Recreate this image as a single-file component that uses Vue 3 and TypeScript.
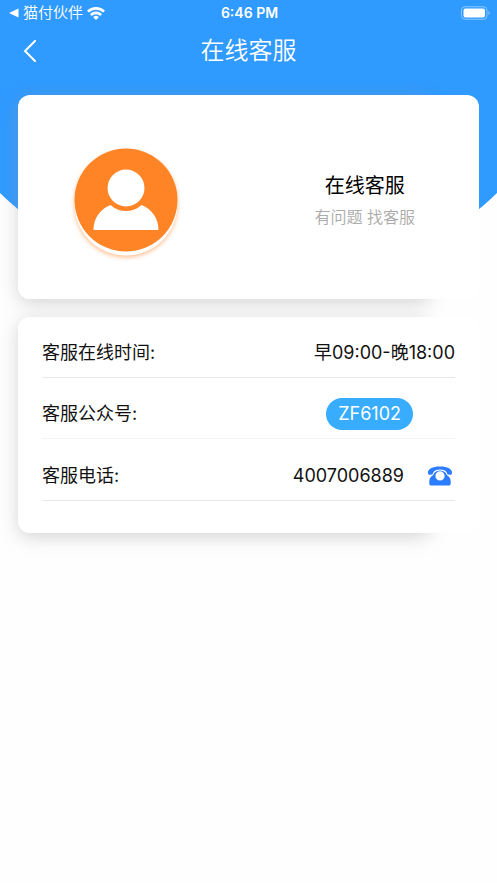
<script setup lang="ts">
import { ref } from 'vue'

const hours = ref('早09:00-晚18:00')
const account = ref('ZF6102')
const phone = ref('4007006889')
</script>

<template>
  <div class="page">
    <div class="backdrop" aria-hidden="true"></div>

    <div class="status">
      <a class="return" href="#">
        <svg width="10" height="10" viewBox="0 0 10 10" aria-hidden="true"><path d="M0 5 9.500.5v9z" fill="#fff" /></svg>
        <span>猫付伙伴</span>
        <svg class="wifi" width="18" height="13" viewBox="0 0 18 13" fill="none" stroke="#fff" stroke-width="2.600" aria-hidden="true">
          <path d="M.9 4.700a11.500 11.500 0 0 1 16.200 0" />
          <path d="M3.900 8a7.300 7.300 0 0 1 10.200 0" />
          <path d="M9 13 6.200 10.200a4 4 0 0 1 5.600 0z" fill="#fff" stroke="none" />
        </svg>
      </a>
      <span class="clock">6:46 PM</span>
      <svg class="battery" width="30" height="14" viewBox="0 0 30 14" aria-hidden="true">
        <rect x="1.500" y=".75" width="25.500" height="12.500" rx="3.500" fill="none" stroke="#fff" stroke-opacity=".45" />
        <rect x="3.500" y="2.500" width="21.500" height="9" rx="2" fill="#fff" />
        <path d="M28.500 5v4q1.200-.6 1.200-2T28.500 5z" fill="#fff" fill-opacity=".5" />
      </svg>
    </div>

    <header class="nav">
      <button class="back" type="button" aria-label="返回">
        <svg width="14" height="22" viewBox="0 0 14 22" fill="none" stroke="#fff" stroke-width="2" stroke-linecap="round" aria-hidden="true">
          <path d="M12 1 2 11l10 10" />
        </svg>
      </button>
      <h1>在线客服</h1>
    </header>

    <main>
      <section class="card profile">
        <svg class="avatar" viewBox="0 0 104 104" aria-hidden="true">
          <circle cx="52" cy="52" r="51.500" fill="#ff8426" />
          <circle cx="52" cy="40" r="18.500" fill="#fff" />
          <path d="M19.500 82C19.500 70 26 61.500 36.500 57Q43 63 52 63T67.500 57C78 61.500 84.500 70 84.500 82z" fill="#fff" />
        </svg>
        <div class="intro">
          <h2>在线客服</h2>
          <p>有问题 找客服</p>
        </div>
      </section>

      <section class="card details">
        <div class="row">
          <span>客服在线时间:</span>
          <span>{{ hours }}</span>
        </div>
        <div class="row">
          <span>客服公众号:</span>
          <button class="pill" type="button">{{ account }}</button>
        </div>
        <div class="row">
          <span>客服电话:</span>
          <a class="phone" :href="`tel:${phone}`">
            <span>{{ phone }}</span>
            <svg width="26" height="20" viewBox="0 0 26 20" fill="#2b7cff" aria-hidden="true">
              <path d="M1 7.200C.3 3.200 5.500.5 13 .5S25.700 3.200 25 7.200c-.2 1.400-1.100 1.800-2.700 1.600-1.700-.2-2.300-.8-2.500-2.300C18.800 4.700 16.500 3.500 13 3.500S7.200 4.700 6.200 6.500C6 8 5.400 8.600 3.700 8.800 2.100 9 1.200 8.600 1 7.200z" />
              <path fill-rule="evenodd" d="M7.300 7C8.500 5.300 10.400 4.400 13 4.400s4.500.9 5.700 2.600c.8 2.200 1.900 2.600 3.300 3.700 1.100 1 1.700 2.800 1.700 5.300v1.500c0 1.500-.7 2-2 2H4.300c-1.300 0-2-.5-2-2V16c0-2.500.6-4.300 1.700-5.300C5.400 9.600 6.500 9.200 7.300 7zM13 5.300a4.600 4.600 0 1 0 0 9.200 4.600 4.600 0 1 0 0-9.200z" />
            </svg>
          </a>
        </div>
      </section>
    </main>
  </div>
</template>

<style>
body {
  margin: 0;
  background: #fefefe;
}
</style>

<style scoped>
.page {
  position: relative;
  min-height: 100vh;
  color: #111;
  font-family: Inter, "Noto Sans CJK SC", sans-serif;
  font-size: 18px;
  line-height: 24px;
}
.backdrop {
  position: absolute;
  inset: 0 0 auto;
  height: 290px;
  background: #2f9aff;
  clip-path: ellipse(67% 100% at 50% 0);
}
.status,
.nav,
main {
  position: relative;
}
.status {
  display: grid;
  grid-template-columns: 1fr auto 1fr;
  align-items: center;
  height: 26px;
  padding: 0 7px 0 9px;
  color: #fff;
  font-size: 14px;
}
.return {
  display: flex;
  align-items: center;
  gap: 4px;
  color: inherit;
  font-size: 15px;
  font-weight: 350;
  text-decoration: none;
}
.clock {
  font-weight: 600;
}
.battery {
  justify-self: end;
}
.nav {
  display: grid;
  grid-template-columns: 1fr auto 1fr;
  align-items: center;
  height: 49px;
  padding: 0 23px;
  color: #fff;
}
.back {
  display: flex;
  justify-self: start;
  padding: 0;
  border: 0;
  background: none;
  cursor: pointer;
}
h1,
h2,
p {
  margin: 0;
  font-weight: 400;
}
h1 {
  font-size: 24px;
  font-weight: 350;
  line-height: 32px;
}
main {
  z-index: 0;
  display: grid;
  gap: 18px;
  padding: 20px 18px;
}
.card {
  position: relative;
  border-radius: 12px;
  background: #fff;
}
/* The shadow stops short of the card's right edge. */
.card::before {
  content: "";
  position: absolute;
  z-index: -1;
  inset: 0 48px 0 0;
  border-radius: 12px;
  box-shadow: 0 4px 18px rgba(150, 150, 150, 0.4);
}
.profile {
  display: grid;
  grid-template-columns: 47% 53%;
  align-items: center;
  justify-items: center;
  min-height: 204px;
  padding-top: 5px;
  box-sizing: border-box;
}
.avatar {
  width: 104px;
  height: 104px;
  border-radius: 50%;
  filter: drop-shadow(0 4px 0 #fff) drop-shadow(0 2px 2px rgba(255, 132, 38, 0.5));
}
.intro {
  display: grid;
  gap: 4px;
  padding-left: 16px;
  text-align: center;
}
h2 {
  color: #000;
  font-size: 20px;
  line-height: 30px;
}
p {
  color: #aaa;
  font-size: 16px;
  font-weight: 350;
  line-height: 24px;
}
.details {
  padding: 0 24px 32px;
}
.row {
  display: flex;
  align-items: center;
  justify-content: space-between;
  box-sizing: border-box;
  height: 61px;
  padding-top: 12px;
  border-bottom: 1px solid #e8e8e8;
}
.row:nth-child(2) {
  border-bottom-color: #f4f4f4;
}
.row:last-child {
  height: 62px;
}
.pill {
  margin-right: 42px;
  padding: 4px 12px;
  border: 0;
  border-radius: 16px;
  background: #38acff;
  color: #fff;
  font: inherit;
  cursor: pointer;
}
.phone {
  display: flex;
  align-items: center;
  gap: 23px;
  padding-right: 2px;
  color: inherit;
  text-decoration: none;
}
</style>
